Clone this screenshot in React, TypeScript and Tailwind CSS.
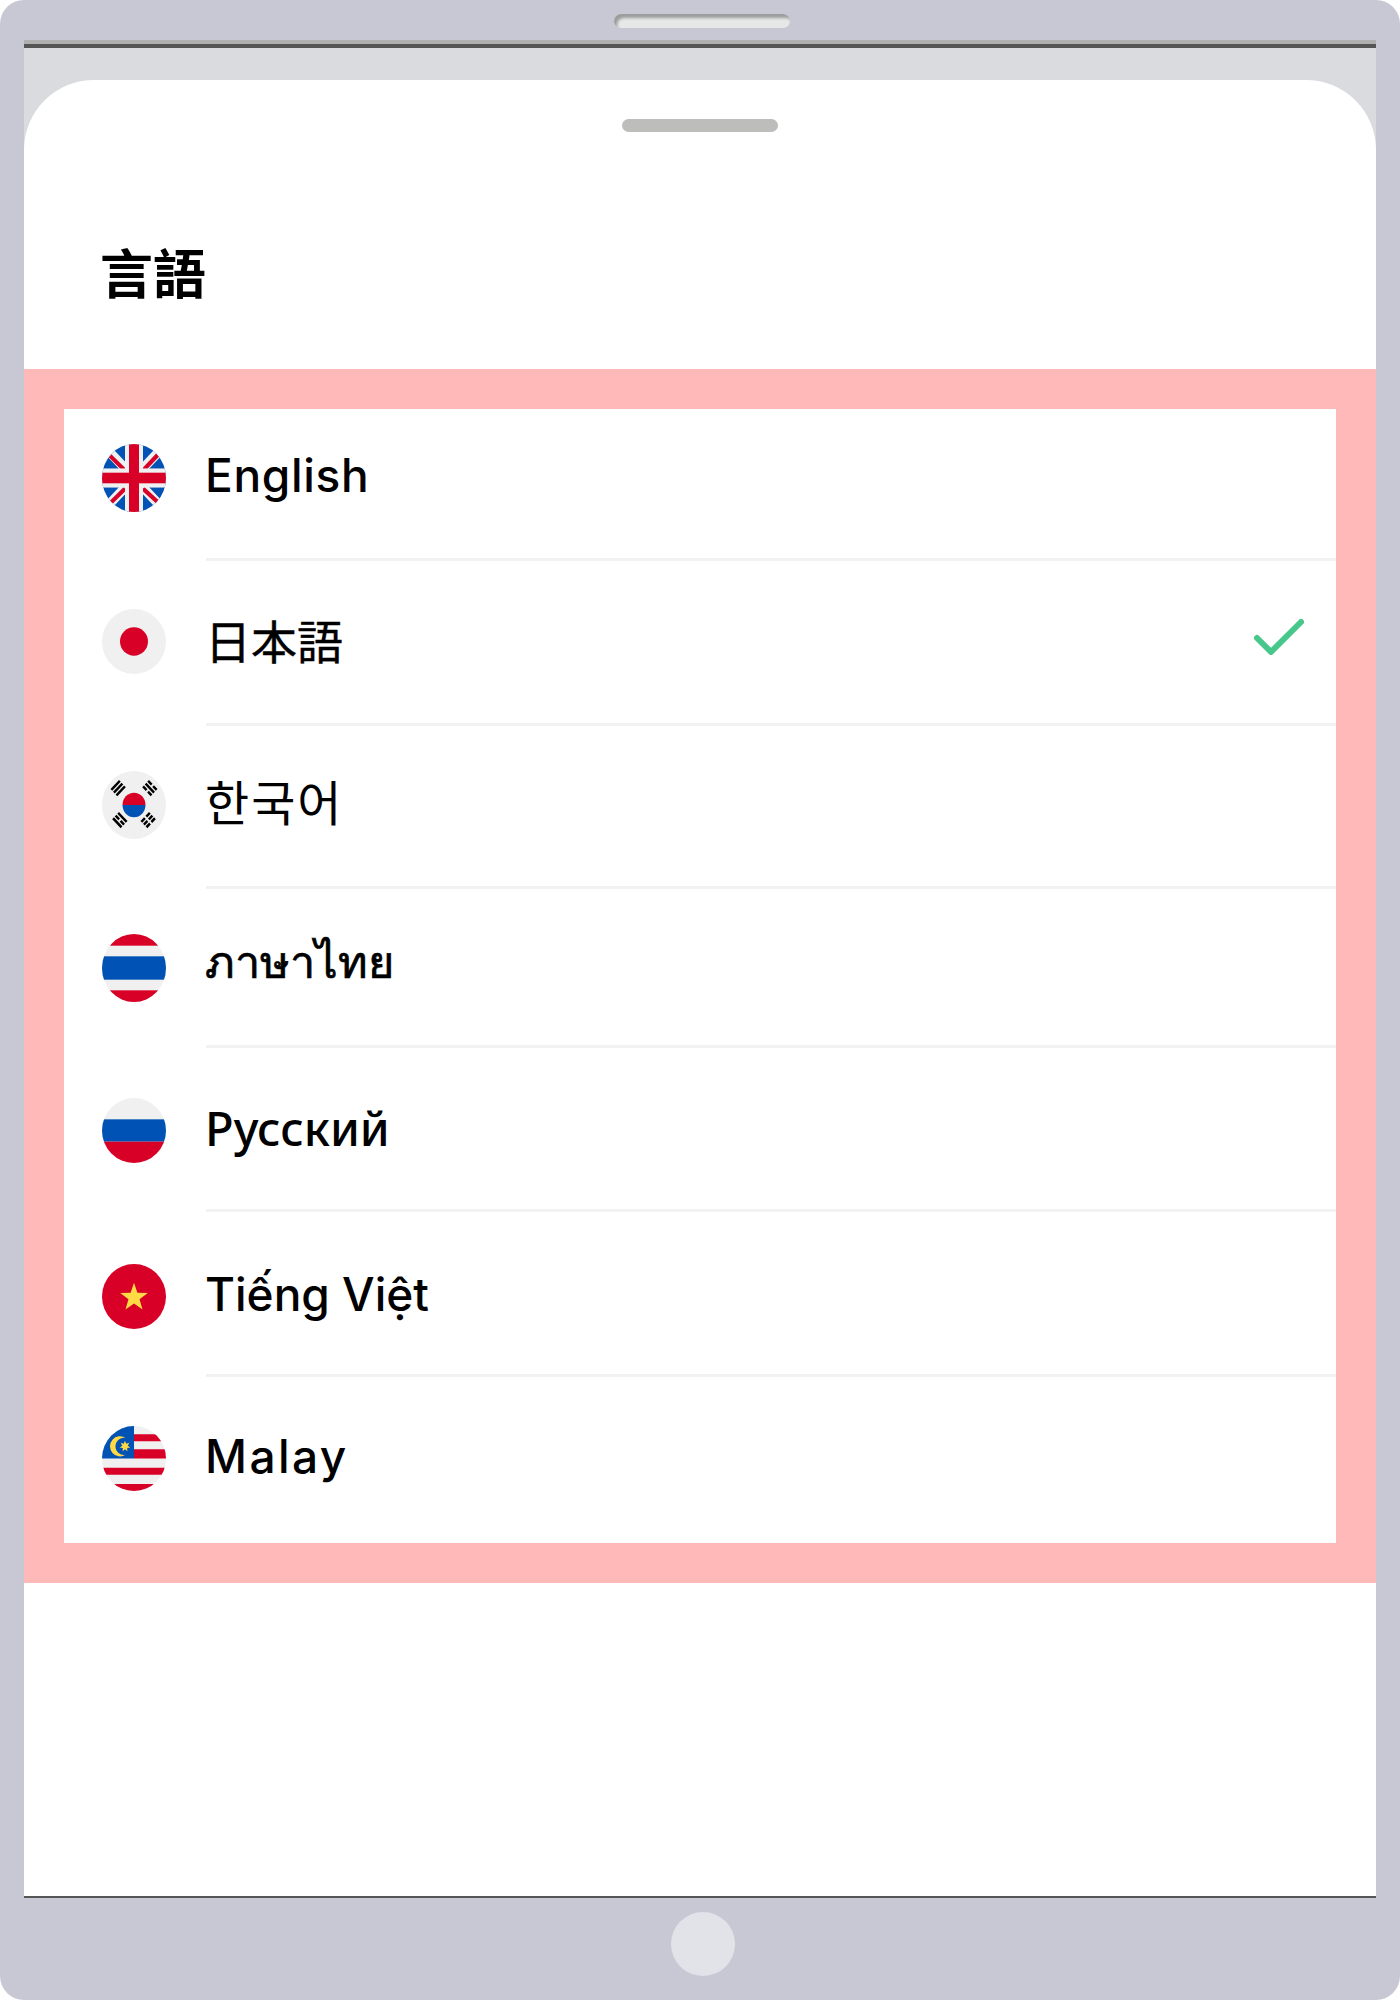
function starPoints(cx: number, cy: number, outer: number, inner: number, n: number) {
  const pts: string[] = [];
  for (let i = 0; i < n * 2; i++) {
    const r = i % 2 === 0 ? outer : inner;
    const a = -Math.PI / 2 + (i * Math.PI) / n;
    pts.push(`${(cx + r * Math.cos(a)).toFixed(2)},${(cy + r * Math.sin(a)).toFixed(2)}`);
  }
  return pts.join(" ");
}

function Circle({ children, tall }: { children: React.ReactNode; tall?: boolean }) {
  return (
    <svg
      viewBox="0 0 64 64"
      preserveAspectRatio="none"
      className={tall ? "w-16 h-[68px] shrink-0" : "w-16 h-[65px] shrink-0"}
    >
      <defs>
        <clipPath id="flag-circle">
          <circle cx="32" cy="32" r="32" />
        </clipPath>
      </defs>
      <g clipPath="url(#flag-circle)">{children}</g>
    </svg>
  );
}

function UkFlag() {
  return (
    <Circle tall>
      <rect width="64" height="64" fill="#0052b4" />
      <path d="M4 4 60 60M60 4 4 60" stroke="#f0f0f0" strokeWidth="9" />
      <path d="M8 11 23 25M41 25 56 10M9 55 23 42M41 42 56 55" stroke="#d80027" strokeWidth="4" />
      <rect x="23" width="18" height="64" fill="#f0f0f0" />
      <rect y="23" width="64" height="18" fill="#f0f0f0" />
      <rect x="27" width="10" height="64" fill="#d80027" />
      <rect y="27" width="64" height="10" fill="#d80027" />
    </Circle>
  );
}

function JpFlag() {
  return (
    <Circle>
      <rect width="64" height="64" fill="#f0f0f0" />
      <circle cx="32" cy="32" r="14" fill="#d80027" />
    </Circle>
  );
}

// bars: each entry says whether that bar of the trigram is broken
function Trigram({ x, y, angle, bars }: { x: number; y: number; angle: number; bars: boolean[] }) {
  return (
    <g transform={`translate(${x} ${y}) rotate(${angle})`} fill="#000">
      {bars.map((broken, i) => {
        const top = -4.8 + i * 3.6 - 1.2;
        return broken ? (
          <g key={i}>
            <rect x="-6" y={top} width="5" height="2.400" />
            <rect x="1" y={top} width="5" height="2.400" />
          </g>
        ) : (
          <rect key={i} x="-6" y={top} width="12" height="2.400" />
        );
      })}
    </g>
  );
}

function KrFlag() {
  return (
    <Circle tall>
      <rect width="64" height="64" fill="#f0f0f0" />
      <path d="M20.500 32a11.500 11.500 0 0 1 23 0z" fill="#d80027" />
      <path d="M20.500 32a11.500 11.500 0 0 0 23 0z" fill="#0052b4" />
      <Trigram x={17} y={17} angle={-45} bars={[false, false, false]} />
      <Trigram x={47} y={17} angle={45} bars={[true, false, true]} />
      <Trigram x={17} y={47} angle={45} bars={[false, true, false]} />
      <Trigram x={47} y={47} angle={-45} bars={[true, true, true]} />
    </Circle>
  );
}

function ThFlag() {
  return (
    <Circle tall>
      <rect width="64" height="64" fill="#f0f0f0" />
      <rect width="64" height="11" fill="#d80027" />
      <rect y="21" width="64" height="22" fill="#0052b4" />
      <rect y="53" width="64" height="11" fill="#d80027" />
    </Circle>
  );
}

function RuFlag() {
  return (
    <Circle>
      <rect width="64" height="64" fill="#f0f0f0" />
      <rect y="21" width="64" height="22" fill="#0052b4" />
      <rect y="43" width="64" height="21" fill="#d80027" />
    </Circle>
  );
}

function VnFlag() {
  return (
    <Circle>
      <rect width="64" height="64" fill="#d80027" />
      <polygon points={starPoints(32, 33, 14.500, 5.800, 5)} fill="#ffda44" />
    </Circle>
  );
}

function MyFlag() {
  return (
    <Circle>
      <rect width="64" height="64" fill="#f0f0f0" />
      <path d="M32 8H64V15H32zM32 23H64V32H32zM0 41H64V48H0zM0 57H64V64H0z" fill="#d80027" />
      <rect width="32" height="32" fill="#0052b4" />
      <path d="M23.470 11.630A10 10 0 1 0 23.470 28.370A8.500 8.500 0 1 1 23.470 11.630z" fill="#ffda44" />
      <polygon points={starPoints(23, 20, 5.500, 2.800, 7)} fill="#ffda44" />
    </Circle>
  );
}

const langs = [
  {
    name: "English",
    flag: <UkFlag />,
    row: "h-[152px] pb-[15px]",
    text: "mb-[5px] font-['Inter',sans-serif] text-[46px] font-medium tracking-[0.7px]",
  },
  {
    name: "日本語",
    flag: <JpFlag />,
    row: "h-[165px] pb-[5px]",
    text: "mb-[3px] -ml-[4px] font-['Noto_Sans_CJK_JP',sans-serif] text-[46px] font-normal [-webkit-text-stroke:0.4px_black]",
  },
  {
    name: "한국어",
    flag: <KrFlag />,
    row: "h-[163px] pb-[6px]",
    text: "mb-[9px] font-['Noto_Sans_CJK_KR',sans-serif] text-[48px] font-normal tracking-[2px]",
  },
  {
    name: "ภาษาไทย",
    flag: <ThFlag />,
    row: "h-[159px] pb-[2px]",
    text: "mb-[14px] font-['Noto_Sans','Inter',sans-serif] text-[45px] font-normal [-webkit-text-stroke:0.7px_black]",
  },
  {
    name: "Русский",
    flag: <RuFlag />,
    row: "h-[164px] pt-[1px]",
    text: "mb-[5px] -ml-[1px] font-['Noto_Sans',sans-serif] text-[47px] font-medium",
  },
  {
    name: "Tiếng Việt",
    flag: <VnFlag />,
    row: "h-[165px] pt-1",
    text: "mb-[5px] font-['Inter',sans-serif] text-[46px] font-medium",
  },
  {
    name: "Malay",
    flag: <MyFlag />,
    row: "h-[166px] pb-[3px]",
    text: "mb-[4px] font-['Inter',sans-serif] text-[46px] font-medium tracking-[2.4px]",
  },
];

export default function App() {
  return (
    <div className="flex h-[2000px] w-[1400px] flex-col rounded-[24px] bg-[#c8c8d4]">
      {/* Speaker */}
      <div className="flex h-10 shrink-0 justify-center pl-1 pt-3.5">
        <div className="h-[14px] w-[176px] rounded-full bg-[#e6e8e8] shadow-[inset_3px_4px_3px_#9c9c9c]" />
      </div>

      {/* Screen */}
      <div className="mx-6 flex flex-1 flex-col">
        <div className="h-1 bg-[#b0b0b0]" />
        <div className="h-1 bg-[#555555]" />
        <div className="flex flex-1 flex-col bg-[#dadbdf] pt-8">
          <div className="flex flex-1 flex-col rounded-t-[70px] bg-white">
            <div className="flex h-[289px] shrink-0 flex-col">
              <div className="mx-auto mt-[39px] h-[13px] w-[156px] rounded-full bg-[#bdbdbb]" />
              <h1 className="ml-[76px] mt-[101px] font-['Noto_Sans_CJK_TC',sans-serif] text-[53px] font-bold leading-[76px] text-black">
                言語
              </h1>
            </div>

            {/* Language list */}
            <div className="bg-[#ffb9b9] p-10">
              <ul className="bg-white">
                {langs.map((lang, i) => (
                  <li key={lang.name} className={`relative flex items-center pl-[38px] pr-8 ${lang.row}`}>
                    {lang.flag}
                    <span className={`ml-[39px] text-black ${lang.text}`}>{lang.name}</span>
                    {i === 1 && (
                      <svg viewBox="0 0 50 36" className="mb-[8px] ml-auto h-9 w-[50px]">
                        <path
                          d="M3 19 17 33 47 3"
                          fill="none"
                          stroke="#48c78a"
                          strokeWidth="6"
                          strokeLinecap="round"
                          strokeLinejoin="round"
                        />
                      </svg>
                    )}
                    {i < langs.length - 1 && (
                      <div className="absolute bottom-0 left-[142px] right-0 h-[3px] bg-[#f2f2f2]" />
                    )}
                  </li>
                ))}
              </ul>
            </div>
          </div>
        </div>
        <div className="h-0.5 bg-[#555555]" />
      </div>

      {/* Home button */}
      <div className="flex h-[102px] shrink-0 justify-center pl-1.5 pt-3.5">
        <div className="h-16 w-16 rounded-full bg-[#e2e3e8]" />
      </div>
    </div>
  );
}
